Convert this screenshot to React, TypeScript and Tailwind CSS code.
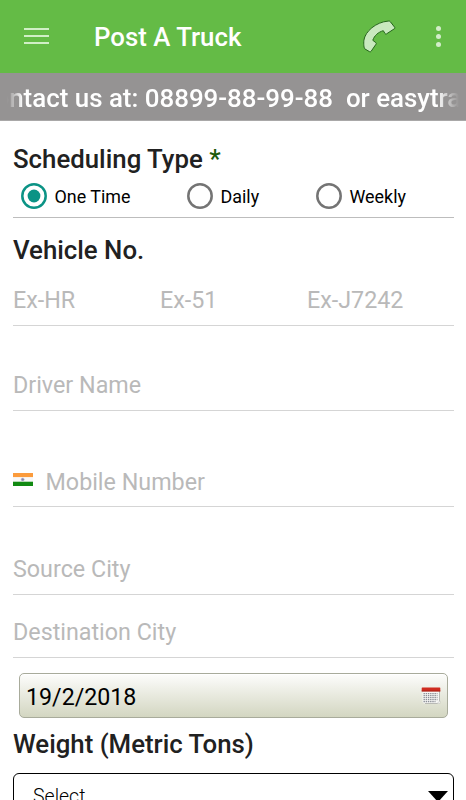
import { useState } from 'react';

const SCHEDULES = [
  { label: 'One Time', width: 'w-[166px]' },
  { label: 'Daily', width: 'w-[129px]' },
  { label: 'Weekly', width: 'w-[120px]' },
];

const INPUT = 'min-w-0 bg-transparent p-0 text-[23.3px] leading-[30px] text-black outline-none placeholder:text-[#b9b9b9]';

export default function App() {
  const [schedule, setSchedule] = useState('One Time');

  return (
    <div className="h-[800px] w-full overflow-hidden bg-white font-['Roboto',sans-serif] text-black">
      <header className="flex h-[73px] items-center bg-[#64bb46] pb-px">
        <button aria-label="Menu" className="ml-6 flex w-[25px] flex-col gap-[5px]">
          <span className="h-[2px] bg-[#d0efc6]" />
          <span className="h-[2px] bg-[#d0efc6]" />
          <span className="h-[2px] bg-[#d0efc6]" />
        </button>
        <h1 className="ml-[45px] mt-[2px] flex-1 whitespace-nowrap text-[25.8px] font-medium leading-8 text-white">Post A Truck</h1>
        <button aria-label="Call" className="mt-px">
          <PhoneIcon />
        </button>
        <button aria-label="More" className="ml-10 mr-[25px] flex flex-col gap-[3px]">
          <span className="size-[5px] rounded-full bg-[#d3edca]" />
          <span className="size-[5px] rounded-full bg-[#d3edca]" />
          <span className="size-[5px] rounded-full bg-[#d3edca]" />
        </button>
      </header>

      <Ticker />

      <main className="pl-[13px] pr-3 pt-[22px]">
        <SectionTitle>
          Scheduling Type <span className="text-[#1d5c0b]">*</span>
        </SectionTitle>
        <div className="flex h-[43px] border-b border-[#bdbdbd] pl-2 pt-[8px]">
          {SCHEDULES.map((item) => (
            <label key={item.label} className={`flex h-[26px] items-center gap-[7.5px] ${item.width}`}>
              <input
                type="radio"
                name="schedule"
                className="sr-only"
                checked={schedule === item.label}
                onChange={() => setSchedule(item.label)}
              />
              <Radio checked={schedule === item.label} />
              <span className="mt-px whitespace-nowrap text-[17.9px] leading-6">{item.label}</span>
            </label>
          ))}
        </div>

        <div className="pt-[16px]">
          <SectionTitle>Vehicle No.</SectionTitle>
        </div>
        <div className="flex h-[60px] items-end border-b border-[#d5d5d5] pb-[10px]">
          <input className={`w-[147px] ${INPUT}`} placeholder="Ex-HR" />
          <input className={`w-[147px] ${INPUT}`} placeholder="Ex-51" />
          <input className={`w-[147px] ${INPUT}`} placeholder="Ex-J7242" />
        </div>
        <div className="flex h-[85px] items-end border-b border-[#d5d5d5] pb-[10px]">
          <input className={`w-full ${INPUT}`} placeholder="Driver Name" />
        </div>
        <div className="flex h-[96px] items-end border-b border-[#d5d5d5] pb-[9px]">
          <IndiaFlag />
          <input className={`flex-1 ${INPUT}`} placeholder="Mobile Number" />
        </div>
        <div className="flex h-[88px] items-end border-b border-[#d5d5d5] pb-[10px]">
          <input className={`w-full ${INPUT}`} placeholder="Source City" />
        </div>
        <div className="flex h-[63px] items-end border-b border-[#d5d5d5] pb-[10px]">
          <input className={`w-full ${INPUT}`} placeholder="Destination City" />
        </div>

        <button className="ml-[6px] mt-[15px] flex h-[45px] w-[429px] items-center justify-between rounded-[5px] border border-[#a8ab9b] bg-linear-to-b from-[#fdfdfc] to-[#d3d6c1] pl-[6px] pr-[6px] shadow-[inset_0_1px_0_#fff]">
          <span className="mt-[2px] text-[23.2px] leading-[30px]">19/2/2018</span>
          <CalendarIcon />
        </button>

        <div className="pt-[10px]">
          <SectionTitle>Weight (Metric Tons)</SectionTitle>
        </div>
        <button className="mt-[13px] flex h-[49px] w-full items-center justify-between rounded-[6px] border border-black pl-[19px] pr-[5px]">
          <span className="mb-[2px] text-[19.5px] font-light leading-6">Select</span>
          <svg width="20" height="11" viewBox="0 0 20 11" className="mb-[2px]">
            <path d="M0 0h20L10 11z" fill="#000" />
          </svg>
        </button>
      </main>
    </div>
  );
}

function SectionTitle({ children }: { children: React.ReactNode }) {
  return <h2 className="whitespace-nowrap text-[25.8px] font-medium leading-8 text-[#212121]">{children}</h2>;
}

function Ticker() {
  return (
    <div className="h-[48px] border-b border-[#a9a8a8] bg-[#959393] px-[7px]">
      <div className="flex h-full items-center overflow-hidden mask-[linear-gradient(to_right,transparent,black_16px,black_calc(100%_-_22px),transparent)]">
        <span className="-ml-[12.5px] mt-[3px] whitespace-pre text-[25.9px] font-medium leading-8 text-white">
          ontact us at: 08899-88-99-88  or easytrac
        </span>
      </div>
    </div>
  );
}

function Radio({ checked }: { checked: boolean }) {
  return (
    <svg width="26" height="26" viewBox="0 0 26 26" className="shrink-0">
      <circle cx="13" cy="13" r="11.7" fill="none" stroke={checked ? '#0b9385' : '#747474'} strokeWidth="2.5" />
      {checked && <circle cx="13" cy="13" r="6.4" fill="#0b9385" />}
    </svg>
  );
}

function PhoneIcon() {
  return (
    <svg width="33" height="33" viewBox="0 0 33 33" fill="#c9e9bf" stroke="#24651a" strokeWidth="1" strokeLinejoin="round">
      <path d="M25.2 1.1Q26.5.7 27.4 1.8L31.7 7.3Q32.2 8.2 31.3 8.8L23.5 13.9Q22.6 14.4 22 13.5L20.3 10.7C15.2 12.1 11.3 15.7 9.8 20.3L12.8 22.6Q13.6 23.3 13 24.2L8.2 31.2Q7.4 32.2 6.4 31.6L2 29C.9 28.2.5 24 .9 20.3C2 11.5 13 2 25.2 1.1Z" />
    </svg>
  );
}

function IndiaFlag() {
  return (
    <svg width="20" height="13" viewBox="0 0 20 13" className="mb-[11px] mr-[12.5px] shrink-0">
      <path d="M0 0h20v4.3H0z" fill="#fb9b3c" />
      <path d="M0 4.3h20v4.4H0z" fill="#f8f8f8" />
      <path d="M0 8.7h20V13H0z" fill="#118a12" />
      <circle cx="9.7" cy="6.5" r="1.5" fill="#8585ad" stroke="#b9b9d0" strokeWidth=".6" />
    </svg>
  );
}

function CalendarIcon() {
  return (
    <svg width="20" height="18" viewBox="0 0 20 18" className="mt-px">
      <path d="M1.5 4h17v12.5h-15q-2 0-2-2z" fill="#f6f6f4" />
      <path d="M18.5 4v10.5l-2 2H4" fill="none" stroke="#b9bab5" />
      <path d="M2.5 6.7h14M2.5 8.7h14M2.5 10.7h14M2.5 12.7h14M2.5 14.7h12" stroke="#8b8e96" strokeWidth="1.2" strokeDasharray="1.4 .8" />
      <path d="M16 16.5l3-2.7v2.7z" fill="#fff" stroke="#b9bab5" strokeWidth=".5" />
      <path d="M1.3.5h17.4q.6 0 .6.6v3.2H.7V1.1q0-.6.6-.6z" fill="#cf2c20" />
      <path d="M.7 3.5h18.6v1H.7z" fill="#a51c13" />
    </svg>
  );
}
